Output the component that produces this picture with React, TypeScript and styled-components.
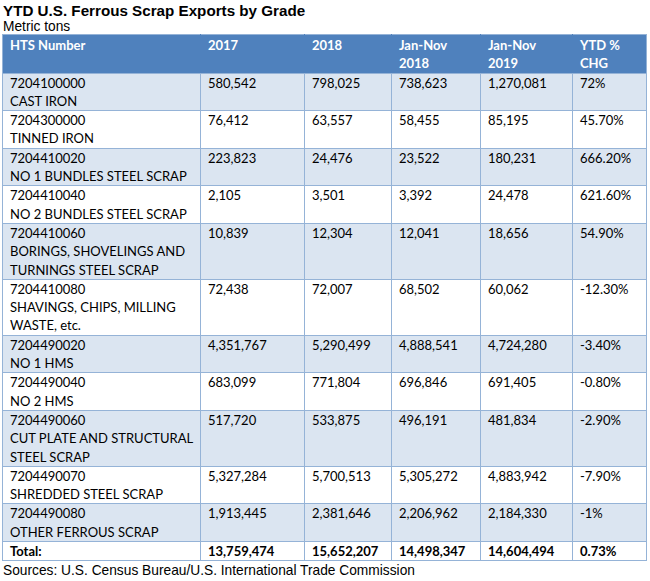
import React from "react";
import styled, { createGlobalStyle } from "styled-components";

const Global = createGlobalStyle`
  html, body { margin: 0; padding: 0; background: #fff; }
  body { font-family: "Liberation Sans", Arial, sans-serif; color: #000; }
`;

const Page = styled.div`
  width: 650px;
  padding: 2px 0 0 3px;
  box-sizing: border-box;
`;

const Title = styled.div`
  font-family: "Liberation Sans", Arial, sans-serif;
  font-weight: bold;
  font-size: 15.2px;
  line-height: 17px;
`;

const Subtitle = styled.div`
  font-family: "Liberation Sans", Arial, sans-serif;
  font-size: 13.75px;
  line-height: 15px;
`;

const Source = styled.div`
  font-family: "Liberation Sans", Arial, sans-serif;
  font-size: 13.75px;
  line-height: 17px;
  padding-top: 1px;
`;

const Table = styled.table`
  margin-left: -1px;
  width: 644px;
  border-collapse: collapse;
  table-layout: fixed;
  font-family: Lato, "Open Sans", sans-serif;
  font-size: 13px;
  line-height: 18.3px;
`;

const Th = styled.th`
  background: #4f81bd;
  color: #fff;
  font-weight: bold;
  text-align: left;
  vertical-align: top;
  padding: 1px 7px 0 7px;
  border-top: 1px solid #95b3d7;
  border-bottom: 1px solid #95b3d7;
  border-left: 1px solid #4f81bd;
  border-right: 1px solid #4f81bd;
  &:first-child { border-left-color: #95b3d7; }
  &:last-child { border-right-color: #95b3d7; }
  white-space: nowrap;
`;

const Tr = styled.tr<{ $shade?: boolean }>`
  background: ${(p) => (p.$shade ? "#dbe5f1" : "#ffffff")};
`;

const Td = styled.td<{ $bold?: boolean }>`
  border: 1px solid #95b3d7;
  padding: 0 7px;
  vertical-align: top;
  white-space: nowrap;
  font-weight: ${(p) => (p.$bold ? "bold" : "normal")};
`;

const Line = styled.div``;

type Row = { code: string; desc: string[]; vals: string[] };

const rows: Row[] = [
  { code: "7204100000", desc: ["CAST IRON"], vals: ["580,542", "798,025", "738,623", "1,270,081", "72%"] },
  { code: "7204300000", desc: ["TINNED IRON"], vals: ["76,412", "63,557", "58,455", "85,195", "45.70%"] },
  { code: "7204410020", desc: ["NO 1 BUNDLES STEEL SCRAP"], vals: ["223,823", "24,476", "23,522", "180,231", "666.20%"] },
  { code: "7204410040", desc: ["NO 2 BUNDLES STEEL SCRAP"], vals: ["2,105", "3,501", "3,392", "24,478", "621.60%"] },
  { code: "7204410060", desc: ["BORINGS, SHOVELINGS AND", "TURNINGS STEEL SCRAP"], vals: ["10,839", "12,304", "12,041", "18,656", "54.90%"] },
  { code: "7204410080", desc: ["SHAVINGS, CHIPS, MILLING", "WASTE, etc."], vals: ["72,438", "72,007", "68,502", "60,062", "-12.30%"] },
  { code: "7204490020", desc: ["NO 1 HMS"], vals: ["4,351,767", "5,290,499", "4,888,541", "4,724,280", "-3.40%"] },
  { code: "7204490040", desc: ["NO 2 HMS"], vals: ["683,099", "771,804", "696,846", "691,405", "-0.80%"] },
  { code: "7204490060", desc: ["CUT PLATE AND STRUCTURAL", "STEEL SCRAP"], vals: ["517,720", "533,875", "496,191", "481,834", "-2.90%"] },
  { code: "7204490070", desc: ["SHREDDED STEEL SCRAP"], vals: ["5,327,284", "5,700,513", "5,305,272", "4,883,942", "-7.90%"] },
  { code: "7204490080", desc: ["OTHER FERROUS SCRAP"], vals: ["1,913,445", "2,381,646", "2,206,962", "2,184,330", "-1%"] },
];

const headers: string[][] = [
  ["HTS Number"],
  ["2017"],
  ["2018"],
  ["Jan-Nov", "2018"],
  ["Jan-Nov", "2019"],
  ["YTD %", "CHG"],
];

const widths = [198, 104, 87, 89, 92, 74];

export default function App() {
  return (
    <Page>
      <Global />
      <Title>YTD U.S. Ferrous Scrap Exports by Grade</Title>
      <Subtitle>Metric tons</Subtitle>
      <Table>
        <colgroup>
          {widths.map((w, i) => (
            <col key={i} style={{ width: w }} />
          ))}
        </colgroup>
        <thead>
          <tr>
            {headers.map((h, i) => (
              <Th key={i}>
                {h.map((l, j) => (
                  <Line key={j}>{l}</Line>
                ))}
              </Th>
            ))}
          </tr>
        </thead>
        <tbody>
          {rows.map((r, i) => (
            <Tr key={r.code} $shade={i % 2 === 0}>
              <Td>
                <Line>{r.code}</Line>
                {r.desc.map((d, j) => (
                  <Line key={j}>{d}</Line>
                ))}
              </Td>
              {r.vals.map((v, j) => (
                <Td key={j}>{v}</Td>
              ))}
            </Tr>
          ))}
          <Tr>
            <Td $bold>Total:</Td>
            <Td $bold>13,759,474</Td>
            <Td $bold>15,652,207</Td>
            <Td $bold>14,498,347</Td>
            <Td $bold>14,604,494</Td>
            <Td $bold>0.73%</Td>
          </Tr>
        </tbody>
      </Table>
      <Source>Sources: U.S. Census Bureau/U.S. International Trade Commission</Source>
    </Page>
  );
}
